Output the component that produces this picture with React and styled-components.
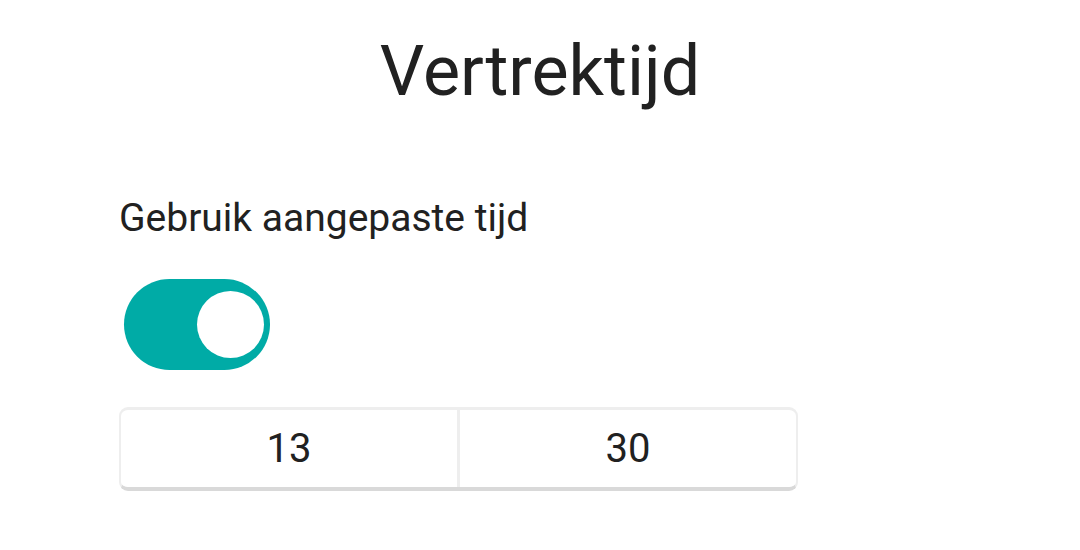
import React, { useState } from "react";
import styled, { createGlobalStyle } from "styled-components";

const Global = createGlobalStyle`
  html, body { margin: 0; padding: 0; background: #ffffff; }
  body { font-family: Roboto, "Noto Sans", sans-serif; color: #212121; }
  * { box-sizing: border-box; }
`;

const Page = styled.div`
  width: 1080px;
  height: 550px;
  display: flex;
  flex-direction: column;
  padding-top: 29px;
`;

const Title = styled.h1`
  margin: 0;
  font-size: 70px;
  font-weight: 400;
  line-height: 84px;
  text-align: center;
  color: #212121;
`;

const Section = styled.div`
  display: flex;
  flex-direction: column;
  align-items: flex-start;
  padding-left: 119px;
  margin-top: 82px;
`;

const Label = styled.div`
  font-size: 39px;
  line-height: 47px;
  color: #212121;
`;

const Track = styled.button`
  margin-top: 37px;
  margin-left: 5px;
  width: 146px;
  height: 91px;
  border: none;
  padding: 0 6px;
  border-radius: 46px;
  background: ${(p) => (p.$on ? "#00aba6" : "#bdbdbd")};
  display: flex;
  align-items: center;
  justify-content: ${(p) => (p.$on ? "flex-end" : "flex-start")};
  cursor: pointer;
`;

const Knob = styled.span`
  width: 67px;
  height: 67px;
  border-radius: 50%;
  background: #ffffff;
`;

const TimeGroup = styled.div`
  margin-top: 37px;
  width: 679px;
  height: 84px;
  display: grid;
  grid-template-columns: 1fr 1fr;
  gap: 3px;
  background: #eeeeee;
  border: 2px solid #eeeeee;
  border-top-width: 3px;
  border-bottom: 4px solid #d9d9d9;
  border-radius: 9px;
  overflow: hidden;
`;

const TimeField = styled.div`
  display: flex;
  align-items: center;
  justify-content: center;
  background: #ffffff;
  font-size: 40px;
  color: #212121;
`;

export default function App() {
  const [on, setOn] = useState(true);
  return (
    <>
      <Global />
      <Page>
        <Title>Vertrektijd</Title>
        <Section>
          <Label>Gebruik aangepaste tijd</Label>
          <Track $on={on} onClick={() => setOn(!on)} aria-pressed={on}>
            <Knob />
          </Track>
          <TimeGroup>
            <TimeField>13</TimeField>
            <TimeField>30</TimeField>
          </TimeGroup>
        </Section>
      </Page>
    </>
  );
}
